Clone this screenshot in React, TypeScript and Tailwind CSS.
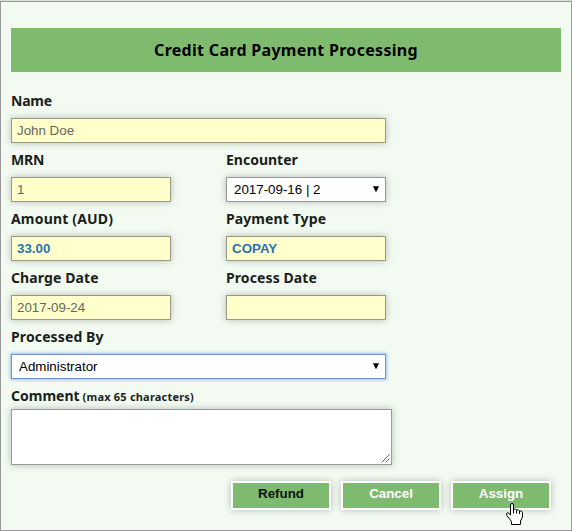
import type { ReactNode } from "react";

const labelFont = "font-['Noto_Sans',Tahoma,sans-serif] font-bold text-[#1a1f1a]";
const fieldFont = "font-['Liberation_Sans',Arial,sans-serif] text-[13.33px]";
const shadow = "shadow-[0_0_7px_rgba(0,0,0,0.25)]";

function Label({ children, spacing }: { children: ReactNode; spacing: string }) {
  return (
    <div className={`flex h-[34px] items-center whitespace-nowrap text-[14px] leading-[34px] ${labelFont}`}>
      <span className={spacing}>{children}</span>
    </div>
  );
}

function Field({ value = "", strong = false }: { value?: string; strong?: boolean }) {
  return (
    <div
      className={`flex h-[25px] items-center border border-[#999988] bg-[#ffffcc] pl-[5px] ${fieldFont} ${shadow} ${
        strong ? "font-bold text-[#2a70b8]" : "text-[#66665a]"
      }`}
    >
      {value}
    </div>
  );
}

function Select({ value, focused = false }: { value: string; focused?: boolean }) {
  return (
    <div
      className={`flex h-[25px] items-center justify-between border bg-white pr-[6px] pl-[7px] text-black ${fieldFont} ${
        focused ? "border-[#7094c8] shadow-[0_0_3px_1px_rgba(90,145,220,0.55)]" : `border-[#999999] ${shadow}`
      }`}
    >
      <span>{value}</span>
      <svg width="6" height="6" viewBox="0 0 6 6" className="-mt-[2px]">
        <path d="M0 0.300h6L3.400 5.700h-.8z" fill="#000" />
      </svg>
    </div>
  );
}

function Button({ label, dark = false }: { label: string; dark?: boolean }) {
  return (
    <button
      className={`flex h-[29px] w-[100px] justify-center border-2 border-white bg-[#7fbb6f] pt-[2px] font-['Liberation_Sans',Arial,sans-serif] text-[13.33px] leading-[17px] font-bold ${shadow} ${
        dark ? "text-[#0b160b]" : "text-white"
      }`}
    >
      {label}
    </button>
  );
}

export default function App() {
  return (
    <div className="relative h-[531px] w-[572px] bg-[#d5dfd5] pt-px">
      <main className="flex h-[530px] flex-col border border-[#999999] bg-[#f2faf2] px-[10px] pt-[26px]">
        <h1 className="flex h-[44px] shrink-0 items-center justify-center bg-[#7fbb6f] font-['Noto_Sans',Tahoma,sans-serif] text-[16px] font-bold text-black">
          <span className="tracking-[0.3px]">Credit Card Payment Processing</span>
        </h1>
        <form className="mt-[12px] w-[375px]">
          <Label spacing="tracking-[-0.25px]">Name</Label>
          <Field value="John Doe" />
          <div className="grid grid-cols-[160px_160px] gap-x-[55px]">
            <div>
              <Label spacing="tracking-[-0.2px]">MRN</Label>
              <Field value="1" />
            </div>
            <div>
              <Label spacing="tracking-[0px]">Encounter</Label>
              <Select value="2017-09-16 | 2" />
            </div>
            <div>
              <Label spacing="tracking-[0.18px]">Amount (AUD)</Label>
              <Field value="33.00" strong />
            </div>
            <div>
              <Label spacing="tracking-[0.1px]">Payment Type</Label>
              <Field value="COPAY" strong />
            </div>
            <div>
              <Label spacing="tracking-[0.1px]">Charge Date</Label>
              <Field value="2017-09-24" />
            </div>
            <div>
              <Label spacing="tracking-[0.1px]">Process Date</Label>
              <Field />
            </div>
          </div>
          <Label spacing="tracking-[0.12px]">Processed By</Label>
          <Select value="Administrator" focused />
          <div className={`flex h-[30px] items-baseline gap-[3px] whitespace-nowrap text-[14px] leading-[34px] ${labelFont}`}>
            <span>Comment</span>
            <span className="text-[11px] tracking-[0.2px]">(max 65 characters)</span>
          </div>
          <div className={`flex h-[56px] w-[381px] items-end justify-end border border-[#999999] bg-white p-[1px] ${shadow}`}>
            <svg width="9" height="9" viewBox="0 0 9 9">
              <path d="M0.5 8.5l8-8M4.5 8.5l4-4" stroke="#666" strokeWidth="1" />
            </svg>
          </div>
        </form>
        <div className="mt-[16px] flex justify-end gap-[10px] pr-[10px]">
          <Button label="Refund" dark />
          <Button label="Cancel" />
          <Button label="Assign" />
        </div>
      </main>
      <svg className="absolute top-[503px] left-[506px]" width="17" height="22" viewBox="0 0 17 22">
        <path
          d="M4.500 2Q4.500.5 6 .5T7.500 2V6.500Q9.500 5.200 10.500 7Q12.500 6 13.500 8Q16 7.500 16.500 9.500V14L14.500 18V21.500H5.500V18.500L.8 12.500Q-.2 9.800 2 9.700L4.500 12Z"
          fill="#fff"
          stroke="#000"
          strokeWidth="1"
          strokeLinejoin="round"
        />
        <path d="M7.500 6v4.500M10.500 7V10.500M13.500 8V11" stroke="#000" fill="none" />
      </svg>
    </div>
  );
}
